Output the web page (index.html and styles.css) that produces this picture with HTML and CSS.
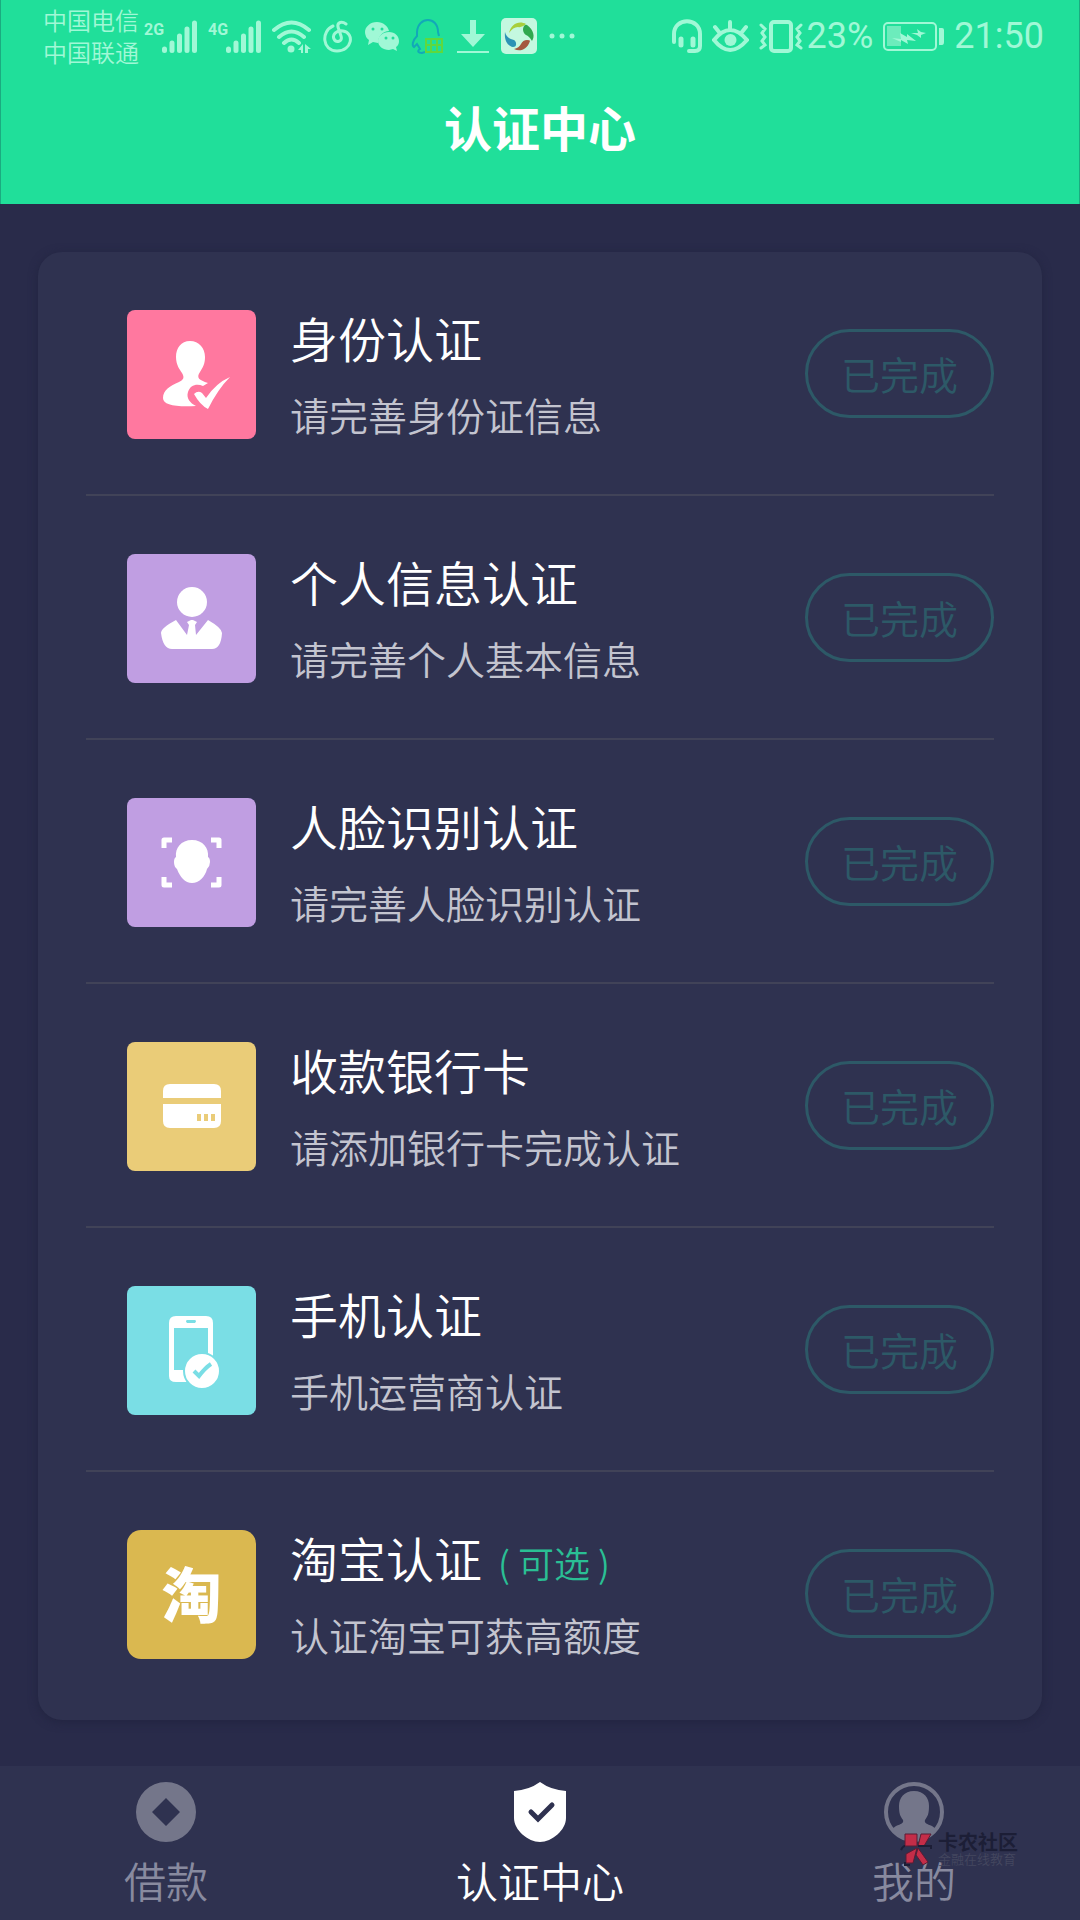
FILE: index.html
```html
<!DOCTYPE html>
<html lang="zh-CN">
<head>
    <meta charset="UTF-8">
    <meta name="viewport" content="width=device-width, initial-scale=1">
    <title>认证中心</title>
    <link rel="stylesheet" href="styles.css">
</head>
<body>
<header class="header">
    <div class="status">
        <div class="status-left">
            <div class="carrier">
                <p>中国电信</p>
                <p>中国联通</p>
            </div>
            <div class="icons">
                <svg width="53" height="36" viewBox="0 0 53 36">
                    <text class="net" x="0" y="17">2G</text>
                    <path class="bars" d="M20.500 31v1.500M28 25v7.500M35.500 18v14.500M43 11v21.500M50.500 5v27.500"/>
                </svg>
                <svg width="53" height="36" viewBox="0 0 53 36">
                    <text class="net" x="0" y="17">4G</text>
                    <path class="bars" d="M20.500 31v1.500M28 25v7.500M35.500 18v14.500M43 11v21.500M50.500 5v27.500"/>
                </svg>
                <!-- wifi -->
                <svg width="40" height="36" viewBox="0 0 40 36">
                    <path class="line" d="M2 12Q19.500-3 37 12M7 19Q19.500 8 32 19M12 25Q19.500 18 27 25"/>
                    <circle class="fill" cx="19" cy="31" r="3.500"/>
                    <path class="fill" d="M31 26v9h-2v-3h-3zM33 26l6 5h-3v4h-3z"/>
                </svg>
                <!-- music -->
                <svg width="30" height="36" viewBox="0 0 30 36">
                    <path class="line thin" d="M10 8C-2 13-1 33 14 33S32 15 20 13C13 12 9 17 11 21S20 24 18 18L15 9C14 4 19 3 23 6"/>
                </svg>
                <!-- wechat -->
                <svg width="36" height="36" viewBox="0 0 36 36">
                    <path class="fill" d="M13 4C6 4 1 9 1 14q0 5 4 8l-1 5 5-3 5 1C14 18 19 13 25 13 24 8 19 4 13 4z"/>
                    <path class="fill" d="M25 14c-6 0-11 4-11 9s5 9 11 9l4-1 4 2-1-4q3-2 3-6c0-5-4-9-10-9z"/>
                    <g class="dot"><circle cx="9" cy="11" r="1.500"/><circle cx="18" cy="11" r="1.500"/><circle cx="22" cy="20" r="1.500"/><circle cx="29" cy="20" r="1.500"/></g>
                </svg>
                <!-- qq -->
                <svg width="34" height="36" viewBox="0 0 34 36">
                    <path class="qq" d="M28 18l-1-4C27-2 7-2 6 14v4C1 23 1 28 3 29l3-3 3 5c-3 2-2 4 2 4l3-1"/>
                    <path class="mail" d="M15 21h16v13H15zM20 21v13M26 21v13M15 27h16"/>
                </svg>
                <!-- download -->
                <svg width="34" height="36" viewBox="0 0 34 36">
                    <path class="fill" d="M14 2h6v14h9L17 29 5 16h9zM1 33h32v2H1z"/>
                </svg>
                <svg width="36" height="36" viewBox="0 0 36 36">
                    <rect class="app" width="36" height="36" rx="5"/>
                    <path fill="#a8cf3c" d="M8 15C10 6 18 2 25 6q-4 4-8 3-5 0-9 6z"/>
                    <path fill="#2fa84f" d="M22 11q1-5 4-4c7 5 8 12 5 16q-3-5-6-6-3-2-3-6z"/>
                    <path fill="#a45a40" d="M29 23c-3 9-10 11-16 8q5-1 7-5 2-4 6-4 3 0 3 1z"/>
                    <path fill="#2b93b5" d="M4 14c-1 9 3 14 8 15 4 0 4-5 1-7-4-1-8-3-9-8z"/>
                </svg>
                <svg width="28" height="36" viewBox="0 0 28 36">
                    <g class="fill"><circle cx="4" cy="18" r="2.500"/><circle cx="14" cy="18" r="2.500"/><circle cx="24" cy="18" r="2.500"/></g>
                </svg>
            </div>
        </div>
        <div class="status-right">
            <!-- headset -->
            <svg width="30" height="36" viewBox="0 0 30 36">
                <path class="line" d="M2 24V16C2-1 28-1 28 16V28q0 5-5 5H17"/>
                <path class="pads" d="M9 21v6M21 21v6"/>
            </svg>
            <!-- eye -->
            <svg width="37" height="36" viewBox="0 0 37 36">
                <path class="line" d="M2 22Q18 2 35 22 18 42 2 22zM18 12V4M7 14L3 9M30 14l4-5"/>
                <circle class="fill" cx="18.500" cy="22" r="6"/>
            </svg>
            <div class="battery-text">
                <!-- vibrate -->
                <svg width="44" height="36" viewBox="0 0 44 36">
                    <rect class="line" x="12" y="4" width="20" height="29" rx="3"/>
                    <path class="zig" d="M2 7l4 4-3 4 3 4-3 4 3 4-4 3M42 7l-4 4 3 4-3 4 3 4-3 4 4 3"/>
                </svg>
                <span>23%</span>
            </div>
            <!-- battery -->
            <svg width="61" height="36" viewBox="0 0 61 36">
                <rect class="cell" x="1" y="5" width="52" height="27" rx="4"/>
                <path class="charge" d="M4 8h14v20H4z"/>
                <path class="fill" d="M9 20l9 1-1-6 7 4 0-3 9 7-9-1 1 4-7-4v2zM28 15l7 0-1-4 4 3 5 1-5 2 0 3-4-3zM56 10h3q2 0 2 2v12q0 3-2 3h-3z"/>
            </svg>
            <span>21:50</span>
        </div>
    </div>
    <h1>认证中心</h1>
</header>

<main class="card">
    <section class="item">
        <div class="pic pink">
            <svg width="129" height="129" viewBox="0 0 129 129">
                <path class="w" d="M63 31c-9 0-14 7-14 16 0 8 4 13 6 16 3 5 1 7-3 9-9 4-16 8-16 16 0 7 12 9 33 8-6-3-10-8-8-14 2-7 9-9 15-6l5-3c-9-3-12-5-8-11 3-5 5-8 5-15 0-9-6-16-15-16z"/>
                <path class="w" d="M67 84q4-4 8-1l4 5q10-15 24-21-12 12-22 32-8-4-14-15z"/>
            </svg>
        </div>
        <div class="text">
            <h2>身份认证</h2>
            <p>请完善身份证信息</p>
        </div>
        <button class="done" disabled>已完成</button>
    </section>
    <section class="item">
        <div class="pic purple">
            <svg width="129" height="129" viewBox="0 0 129 129">
                <circle class="w" cx="65" cy="48" r="15"/>
                <path class="w" d="M49 66L60 81l2-10-2-3 4-2h2l4 2-2 3 1 10 12-15q14 8 14 13-1 16-10 16H45q-9 0-11-16 0-5 15-13z"/>
            </svg>
        </div>
        <div class="text">
            <h2>个人信息认证</h2>
            <p>请完善个人基本信息</p>
        </div>
        <button class="done" disabled>已完成</button>
    </section>
    <section class="item">
        <div class="pic purple">
            <svg width="129" height="129" viewBox="0 0 129 129">
                <path class="w" d="M65 42c-11 0-17 8-16 17q-2 1-2 5 0 5 3 7c3 8 8 14 15 14s13-6 15-14q3-3 3-7t-2-5c1-9-5-17-16-17z"/>
                <path class="corner" d="M37 50v-8h8M84 42h8v8M92 79v8h-8M45 87h-8v-8"/>
            </svg>
        </div>
        <div class="text">
            <h2>人脸识别认证</h2>
            <p>请完善人脸识别认证</p>
        </div>
        <button class="done" disabled>已完成</button>
    </section>
    <section class="item">
        <div class="pic yellow">
            <svg width="129" height="129" viewBox="0 0 129 129">
                <path class="w" d="M36 56v-7q0-7 7-7h44q7 0 7 7v7zM36 62h58v17q0 7-7 7H43q-7 0-7-7z"/>
                <path class="slots" d="M72 72v7M79 72v7M86 72v7"/>
            </svg>
        </div>
        <div class="text">
            <h2>收款银行卡</h2>
            <p>请添加银行卡完成认证</p>
        </div>
        <button class="done" disabled>已完成</button>
    </section>
    <section class="item">
        <div class="pic cyan">
            <svg width="129" height="129" viewBox="0 0 129 129">
                <path class="w" fill-rule="evenodd" d="M49 30h30q7 0 7 7v53q0 6-7 6H49q-7 0-7-6V37q0-7 7-7zM47 42v42h34V42zM60 34q-2 1 0 3h8q2-2 0-3z"/>
                <circle class="seal" cx="75" cy="85" r="18"/>
                <path class="tick" d="M67 85l5 5q6-8 12-12"/>
            </svg>
        </div>
        <div class="text">
            <h2>手机认证</h2>
            <p>手机运营商认证</p>
        </div>
        <button class="done" disabled>已完成</button>
    </section>
    <section class="item">
        <div class="pic gold">淘</div>
        <div class="text">
            <h2>淘宝认证<small>( 可选 )</small></h2>
            <p>认证淘宝可获高额度</p>
        </div>
        <button class="done" disabled>已完成</button>
    </section>
</main>

<nav class="nav">
    <a href="#loan">
        <svg width="60" height="60" viewBox="0 0 60 60">
            <path class="g" fill-rule="evenodd" d="M30 0a30 30 0 1 0 0 60 30 30 0 1 0 0-60zM30 16l14 14-14 14-14-14z"/>
        </svg>
        <span>借款</span>
    </a>
    <a class="selected" href="#auth">
        <svg width="60" height="60" viewBox="0 0 60 60">
            <path class="w" d="M30 0q11 8 26 9v27c0 12-14 24-26 24S4 48 4 36V9Q19 8 30 0z"/>
            <path class="check" d="M21 30l7 7 14-14"/>
        </svg>
        <span>认证中心</span>
    </a>
    <a href="#mine">
        <svg width="60" height="60" viewBox="0 0 60 60">
            <circle class="ring" cx="30" cy="30" r="28"/>
            <path class="g" d="M30 9c-10 0-15 7-15 15 0 7 1 10 4 14 1 3-2 4-7 6l-4 3c5 8 14 12 22 12s17-4 22-12l-4-3c-5-2-8-3-7-6 3-4 4-7 4-14 0-8-5-15-15-15z"/>
        </svg>
        <span>我的</span>
    </a>
    <div class="mark">
        <svg width="34" height="34" viewBox="0 0 34 34">
            <path class="red" d="M5 2h12v12H5zM21 2h10l-7 12h-6zM6 22l11-6-4 15H6zM18 16l10 14-5 3-7-10z"/>
            <path class="edge" d="M1 18q2-4 4-4M18 14h13v3M5 30v3h5"/>
        </svg>
        <div class="mark-text">
            <b>卡农社区</b>
            <i>金融在线教育</i>
        </div>
    </div>
</nav>
</body>
</html>
```

FILE: styles.css
```css
*{
    margin: 0;
    padding: 0;
    box-sizing: border-box;
}
body{
    min-height: 100vh;
    display: flex;
    flex-direction: column;
    background: #292b4a;
    color: #fff;
    font-family: "Noto Sans CJK SC", sans-serif;
    font-weight: 350;
}
svg{
    display: block;
    flex: none;
}

/* header */
.header{
    background: #20df9a;
    border: solid #1bab80;
    border-width: 0 1px;
    padding-bottom: 46px;
}
.status{
    display: flex;
    justify-content: space-between;
    align-items: center;
    padding: 4px 35px 0 42px;
    color: #a0f8d6;
}
.status-left,.icons,.status-right,.battery-text{
    display: flex;
    align-items: center;
}
.status-left{
    gap: 5px;
}
.carrier{
    font-size: 24px;
    line-height: 32px;
}
.icons{
    gap: 11px;
}
.status-right{
    gap: 10px;
    font: 400 36px/44px Roboto, sans-serif;
}
.battery-text{
    gap: 4px;
}
.header h1{
    margin-top: 26px;
    font-size: 48px;
    line-height: 64px;
    font-weight: 700;
    text-align: center;
}
.net{
    font: 700 16px Roboto, sans-serif;
    fill: #a0f8d6;
}
.bars,.line,.pads,.zig,.cell{
    fill: none;
    stroke: #a0f8d6;
    stroke-width: 4;
    stroke-linecap: round;
}
.bars,.pads{
    stroke-width: 5;
}
.zig,.thin{
    stroke-width: 3;
}
.cell{
    stroke-width: 2;
}
.fill{
    fill: #a0f8d6;
}
.charge{
    fill: #6cecbc;
}
.dot{
    fill: #20df9a;
}
.qq,.mail{
    fill: none;
    stroke: #12a9b8;
    stroke-width: 2;
}
.mail{
    stroke: #5fd83e;
}
.app{
    fill: #c4f8e0;
}

/* list */
.card{
    margin: 48px 38px 46px;
    padding: 0 48px;
    background: #2f3250;
    border-radius: 24px;
    box-shadow: 0 2px 10px #222440;
}
.item{
    display: flex;
    align-items: flex-start;
    padding: 58px 0 52px 41px;
    border-bottom: 2px solid #414358;
}
.item:last-child{
    padding-bottom: 58px;
    border-bottom: 0;
}
.pic{
    width: 129px;
    height: 129px;
    flex: none;
    border-radius: 8px;
}
.pink{
    background: #ff789f;
}
.purple{
    background: #c09ee2;
}
.yellow{
    background: #eacc78;
}
.cyan{
    background: #7adee5;
}
.gold{
    background: #dab850;
    border-radius: 14px;
    font-size: 60px;
    font-weight: 900;
    line-height: 124px;
    text-align: center;
}
.w{
    fill: #fff;
}
.corner{
    fill: none;
    stroke: #fff;
    stroke-width: 5;
    stroke-linejoin: round;
}
.slots{
    stroke: #eacc78;
    stroke-width: 4;
}
.seal{
    fill: #fff;
    stroke: #7adee5;
    stroke-width: 2;
}
.tick{
    fill: none;
    stroke: #7adee5;
    stroke-width: 4;
}
.text{
    flex: 1;
    margin-left: 34px;
}
.text h2{
    font-size: 48px;
    line-height: 54px;
    font-weight: 350;
}
.text small{
    margin-left: 16px;
    font-size: 36px;
    line-height: 36px;
    color: #2abf94;
}
.text p{
    margin-top: 22px;
    font-size: 39px;
    line-height: 56px;
    color: #c3c4cf;
}
.done{
    width: 189px;
    height: 89px;
    margin-top: 19px;
    padding-bottom: 2px;
    background: none;
    border: 3px solid #2d5967;
    border-radius: 45px;
    color: #2d5967;
    font: 350 39px "Noto Sans CJK SC", sans-serif;
}

/* bottom nav */
.nav{
    position: relative;
    display: flex;
    justify-content: space-between;
    margin-top: auto;
    padding: 16px 124px 12px;
    background: #2f3250;
}
.nav a{
    display: flex;
    flex-direction: column;
    align-items: center;
    gap: 10px;
    font-size: 42px;
    line-height: 56px;
    color: #888a9f;
    text-decoration: none;
}
.nav a.selected{
    color: #fff;
}
.g{
    fill: #74768a;
}
.ring{
    fill: none;
    stroke: #74768a;
    stroke-width: 4;
}
.check{
    fill: none;
    stroke: #2f3250;
    stroke-width: 5;
    stroke-linecap: round;
}
.mark{
    position: absolute;
    right: 62px;
    top: 66px;
    display: flex;
    gap: 4px;
}
.mark-text{
    display: flex;
    flex-direction: column;
}
.mark b{
    font-size: 20px;
    line-height: 20px;
    font-weight: 700;
    color: #1c1e36;
}
.mark i{
    font-size: 13px;
    line-height: 14px;
    font-style: normal;
    color: #44475f;
}
.red{
    fill: #c42d48;
    stroke: #5a1c34;
}
.edge{
    fill: none;
    stroke: #1c1e36;
    stroke-width: 2;
}
```
